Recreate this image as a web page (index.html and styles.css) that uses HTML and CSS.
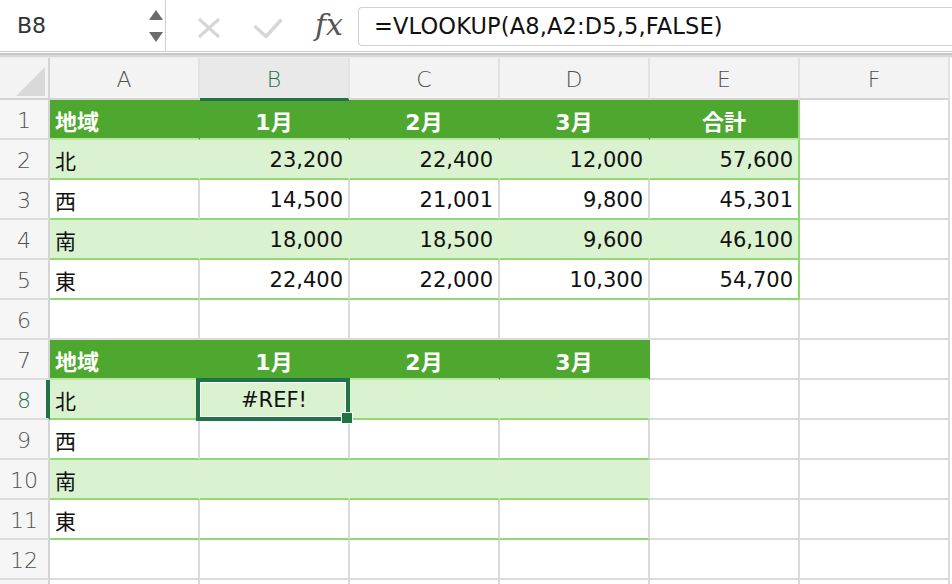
FILE: index.html
```html
<html lang="ja">

<head>
  <meta charset="UTF-8">
  <meta name="viewport" content="width=device-width, initial-scale=1.0">
  <title>VLOOKUP</title>
  <link rel="stylesheet" href="styles.css">
</head>

<body>
  <div class="toolbar">
    <div class="namebox">
      <span class="cellref">B8</span>
      <svg class="spinner" width="14" height="34" viewBox="0 0 14 34">
        <polygon points="7,0 14,10 0,10" fill="#6b6b6b"/>
        <polygon points="0,22 14,22 7,32" fill="#6b6b6b"/>
      </svg>
    </div>
    <div class="actions">
      <svg class="act-cancel" width="24" height="20" viewBox="0 0 24 20">
        <path d="M2 1 L22 19 M22 1 L2 19" stroke="#d6d6d6" stroke-width="3.2" fill="none"/>
      </svg>
      <svg class="act-enter" width="30" height="20" viewBox="0 0 30 20">
        <path d="M1.5 8 L13 18.5 L28.5 1.5" stroke="#d6d6d6" stroke-width="3.4" fill="none"/>
      </svg>
      <span class="fx">fx</span>
    </div>
    <div class="formula">=VLOOKUP(A8,A2:D5,5,FALSE)</div>
  </div>
  <div class="sep"></div>

  <div class="sheet">
    <div class="corner"><div class="corner-tri"></div></div>
    <div class="colhead">A</div>
    <div class="colhead active">B</div>
    <div class="colhead">C</div>
    <div class="colhead">D</div>
    <div class="colhead">E</div>
    <div class="colhead">F</div>

    <div class="rowhead">1</div>
    <div class="cell th">地域</div>
    <div class="cell th center">1月</div>
    <div class="cell th center">2月</div>
    <div class="cell th center">3月</div>
    <div class="cell th center edge">合計</div>
    <div class="cell"></div>

    <div class="rowhead">2</div>
    <div class="cell band">北</div>
    <div class="cell band num">23,200</div>
    <div class="cell band num">22,400</div>
    <div class="cell band num">12,000</div>
    <div class="cell band num edge">57,600</div>
    <div class="cell"></div>

    <div class="rowhead">3</div>
    <div class="cell tr">西</div>
    <div class="cell tr num">14,500</div>
    <div class="cell tr num">21,001</div>
    <div class="cell tr num">9,800</div>
    <div class="cell tr num edge">45,301</div>
    <div class="cell"></div>

    <div class="rowhead">4</div>
    <div class="cell band">南</div>
    <div class="cell band num">18,000</div>
    <div class="cell band num">18,500</div>
    <div class="cell band num">9,600</div>
    <div class="cell band num edge">46,100</div>
    <div class="cell"></div>

    <div class="rowhead">5</div>
    <div class="cell tr">東</div>
    <div class="cell tr num">22,400</div>
    <div class="cell tr num">22,000</div>
    <div class="cell tr num">10,300</div>
    <div class="cell tr num edge">54,700</div>
    <div class="cell"></div>

    <div class="rowhead">6</div>
    <div class="cell"></div>
    <div class="cell"></div>
    <div class="cell"></div>
    <div class="cell"></div>
    <div class="cell"></div>
    <div class="cell"></div>

    <div class="rowhead">7</div>
    <div class="cell th">地域</div>
    <div class="cell th center">1月</div>
    <div class="cell th center">2月</div>
    <div class="cell th center">3月</div>
    <div class="cell"></div>
    <div class="cell"></div>

    <div class="rowhead active">8</div>
    <div class="cell band">北</div>
    <div class="cell band center selected">#REF!<div class="selection"><div class="handle"></div></div></div>
    <div class="cell band"></div>
    <div class="cell band"></div>
    <div class="cell"></div>
    <div class="cell"></div>

    <div class="rowhead">9</div>
    <div class="cell tr">西</div>
    <div class="cell tr"></div>
    <div class="cell tr"></div>
    <div class="cell tr"></div>
    <div class="cell"></div>
    <div class="cell"></div>

    <div class="rowhead">10</div>
    <div class="cell band">南</div>
    <div class="cell band"></div>
    <div class="cell band"></div>
    <div class="cell band"></div>
    <div class="cell"></div>
    <div class="cell"></div>

    <div class="rowhead">11</div>
    <div class="cell tr">東</div>
    <div class="cell tr"></div>
    <div class="cell tr"></div>
    <div class="cell tr"></div>
    <div class="cell"></div>
    <div class="cell"></div>

    <div class="rowhead">12</div>
    <div class="cell"></div>
    <div class="cell"></div>
    <div class="cell"></div>
    <div class="cell"></div>
    <div class="cell"></div>
    <div class="cell"></div>

    <div class="rowhead"></div>
    <div class="cell"></div>
    <div class="cell"></div>
    <div class="cell"></div>
    <div class="cell"></div>
    <div class="cell"></div>
    <div class="cell"></div>
  </div>
</body>

</html>
```

FILE: styles.css
```css
body {
  margin: 0;
  background: #fff;
  font-family: "DejaVu Sans", "Noto Sans CJK JP", sans-serif;
  color: #111;
  overflow: hidden;
}

/* formula bar */

.toolbar {
  display: flex;
  align-items: flex-start;
  height: 51px;
  border-bottom: 1px solid #cbcbcb;
}

.namebox {
  width: 166px;
  height: 51px;
  box-sizing: border-box;
  border-right: 1px solid #cfcfcf;
  display: flex;
  align-items: center;
  justify-content: space-between;
  padding: 0 2px 0 17px;
}

.cellref {
  font-size: 22px;
  color: #333;
}

.spinner {
  margin-top: 2px;
}

.actions {
  display: flex;
  align-items: center;
  height: 51px;
}

.act-cancel {
  margin-left: 31px;
  margin-top: 5px;
}

.act-enter {
  margin-left: 32px;
  margin-top: 5px;
}

.fx {
  margin-left: 32px;
  margin-top: -2px;
  font-family: "DejaVu Serif", serif;
  font-style: italic;
  font-size: 30px;
  color: #555;
}

.formula {
  flex: 1;
  margin: 7px 0 0 15px;
  height: 39px;
  box-sizing: border-box;
  border: 1px solid #d0d0d0;
  border-right: none;
  border-radius: 4px 0 0 4px;
  padding: 5px 0 0 15px;
  font-size: 22.5px;
  letter-spacing: 0.15px;
  color: #111;
  white-space: nowrap;
}

.sep {
  height: 6px;
  background: linear-gradient(#fff 0 1px, #c8c8c8 1px 3px, #dadada 3px 5px, #ececec 5px 6px);
}

/* grid */

.sheet {
  display: grid;
  grid-template-columns: 50px repeat(6, 150px);
  grid-template-rows: 42px;
  grid-auto-rows: 40px;
}

.corner,
.colhead,
.rowhead,
.cell {
  box-sizing: border-box;
}

.corner {
  background: #f3f3f3;
  border-right: 2px solid #d4d4d4;
  border-bottom: 2px solid #d4d4d4;
  display: flex;
  align-items: flex-end;
  justify-content: flex-end;
  padding: 0 3px 2px 0;
}

.corner-tri {
  width: 29px;
  height: 29px;
  background: #d9d9d9;
  clip-path: polygon(100% 0, 100% 100%, 0 100%);
}

.colhead {
  background: #f3f3f3;
  border-right: 2px solid #e2e2e2;
  border-bottom: 2px solid #d4d4d4;
  display: flex;
  align-items: center;
  justify-content: center;
  padding-top: 2px;
  font-size: 22px;
  font-weight: 200;
  color: #505050;
}

.colhead.active {
  background: #e9e9e9;
  border-bottom: 3px solid #217346;
  margin-bottom: -1px;
  position: relative;
  color: #217346;
}

.rowhead {
  background: #f6f6f6;
  border-right: 2px solid #d4d4d4;
  border-bottom: 2px solid #dcdcdc;
  display: flex;
  align-items: center;
  justify-content: center;
  padding-top: 2px;
  font-size: 22px;
  font-weight: 200;
  color: #505050;
}

.rowhead.active {
  color: #217346;
  border-right-color: #217346;
  box-shadow: inset -2px 0 0 #217346;
}

.cell {
  border-right: 2px solid #dadada;
  border-bottom: 2px solid #dadada;
  display: flex;
  align-items: center;
  padding: 2px 5px 0;
  font-size: 21px;
  white-space: nowrap;
}

.cell.th {
  background: #4ea72e;
  border-right-color: #4ea72e;
  border-bottom-color: #b5e6a2;
  color: #fff;
  font-weight: bold;
  font-size: 22px;
}

.cell.band {
  background: #daf2d0;
  border-right-color: #daf2d0;
  border-bottom-color: #8ed973;
}

.cell.tr {
  border-bottom-color: #8ed973;
}

.cell.edge {
  border-right-color: #8ed973;
}

.cell.num {
  justify-content: flex-end;
}

.cell.center {
  justify-content: center;
}

.cell.selected {
  position: relative;
}

.selection {
  position: absolute;
  left: -4px;
  top: -2px;
  right: -2px;
  bottom: -3px;
  border: 4px solid #217346;
  box-shadow: inset 0 0 0 1px #fff;
  z-index: 2;
}

.handle {
  position: absolute;
  right: -7px;
  bottom: -7px;
  width: 10px;
  height: 10px;
  background: #217346;
  border: 1px solid #fff;
}
```
